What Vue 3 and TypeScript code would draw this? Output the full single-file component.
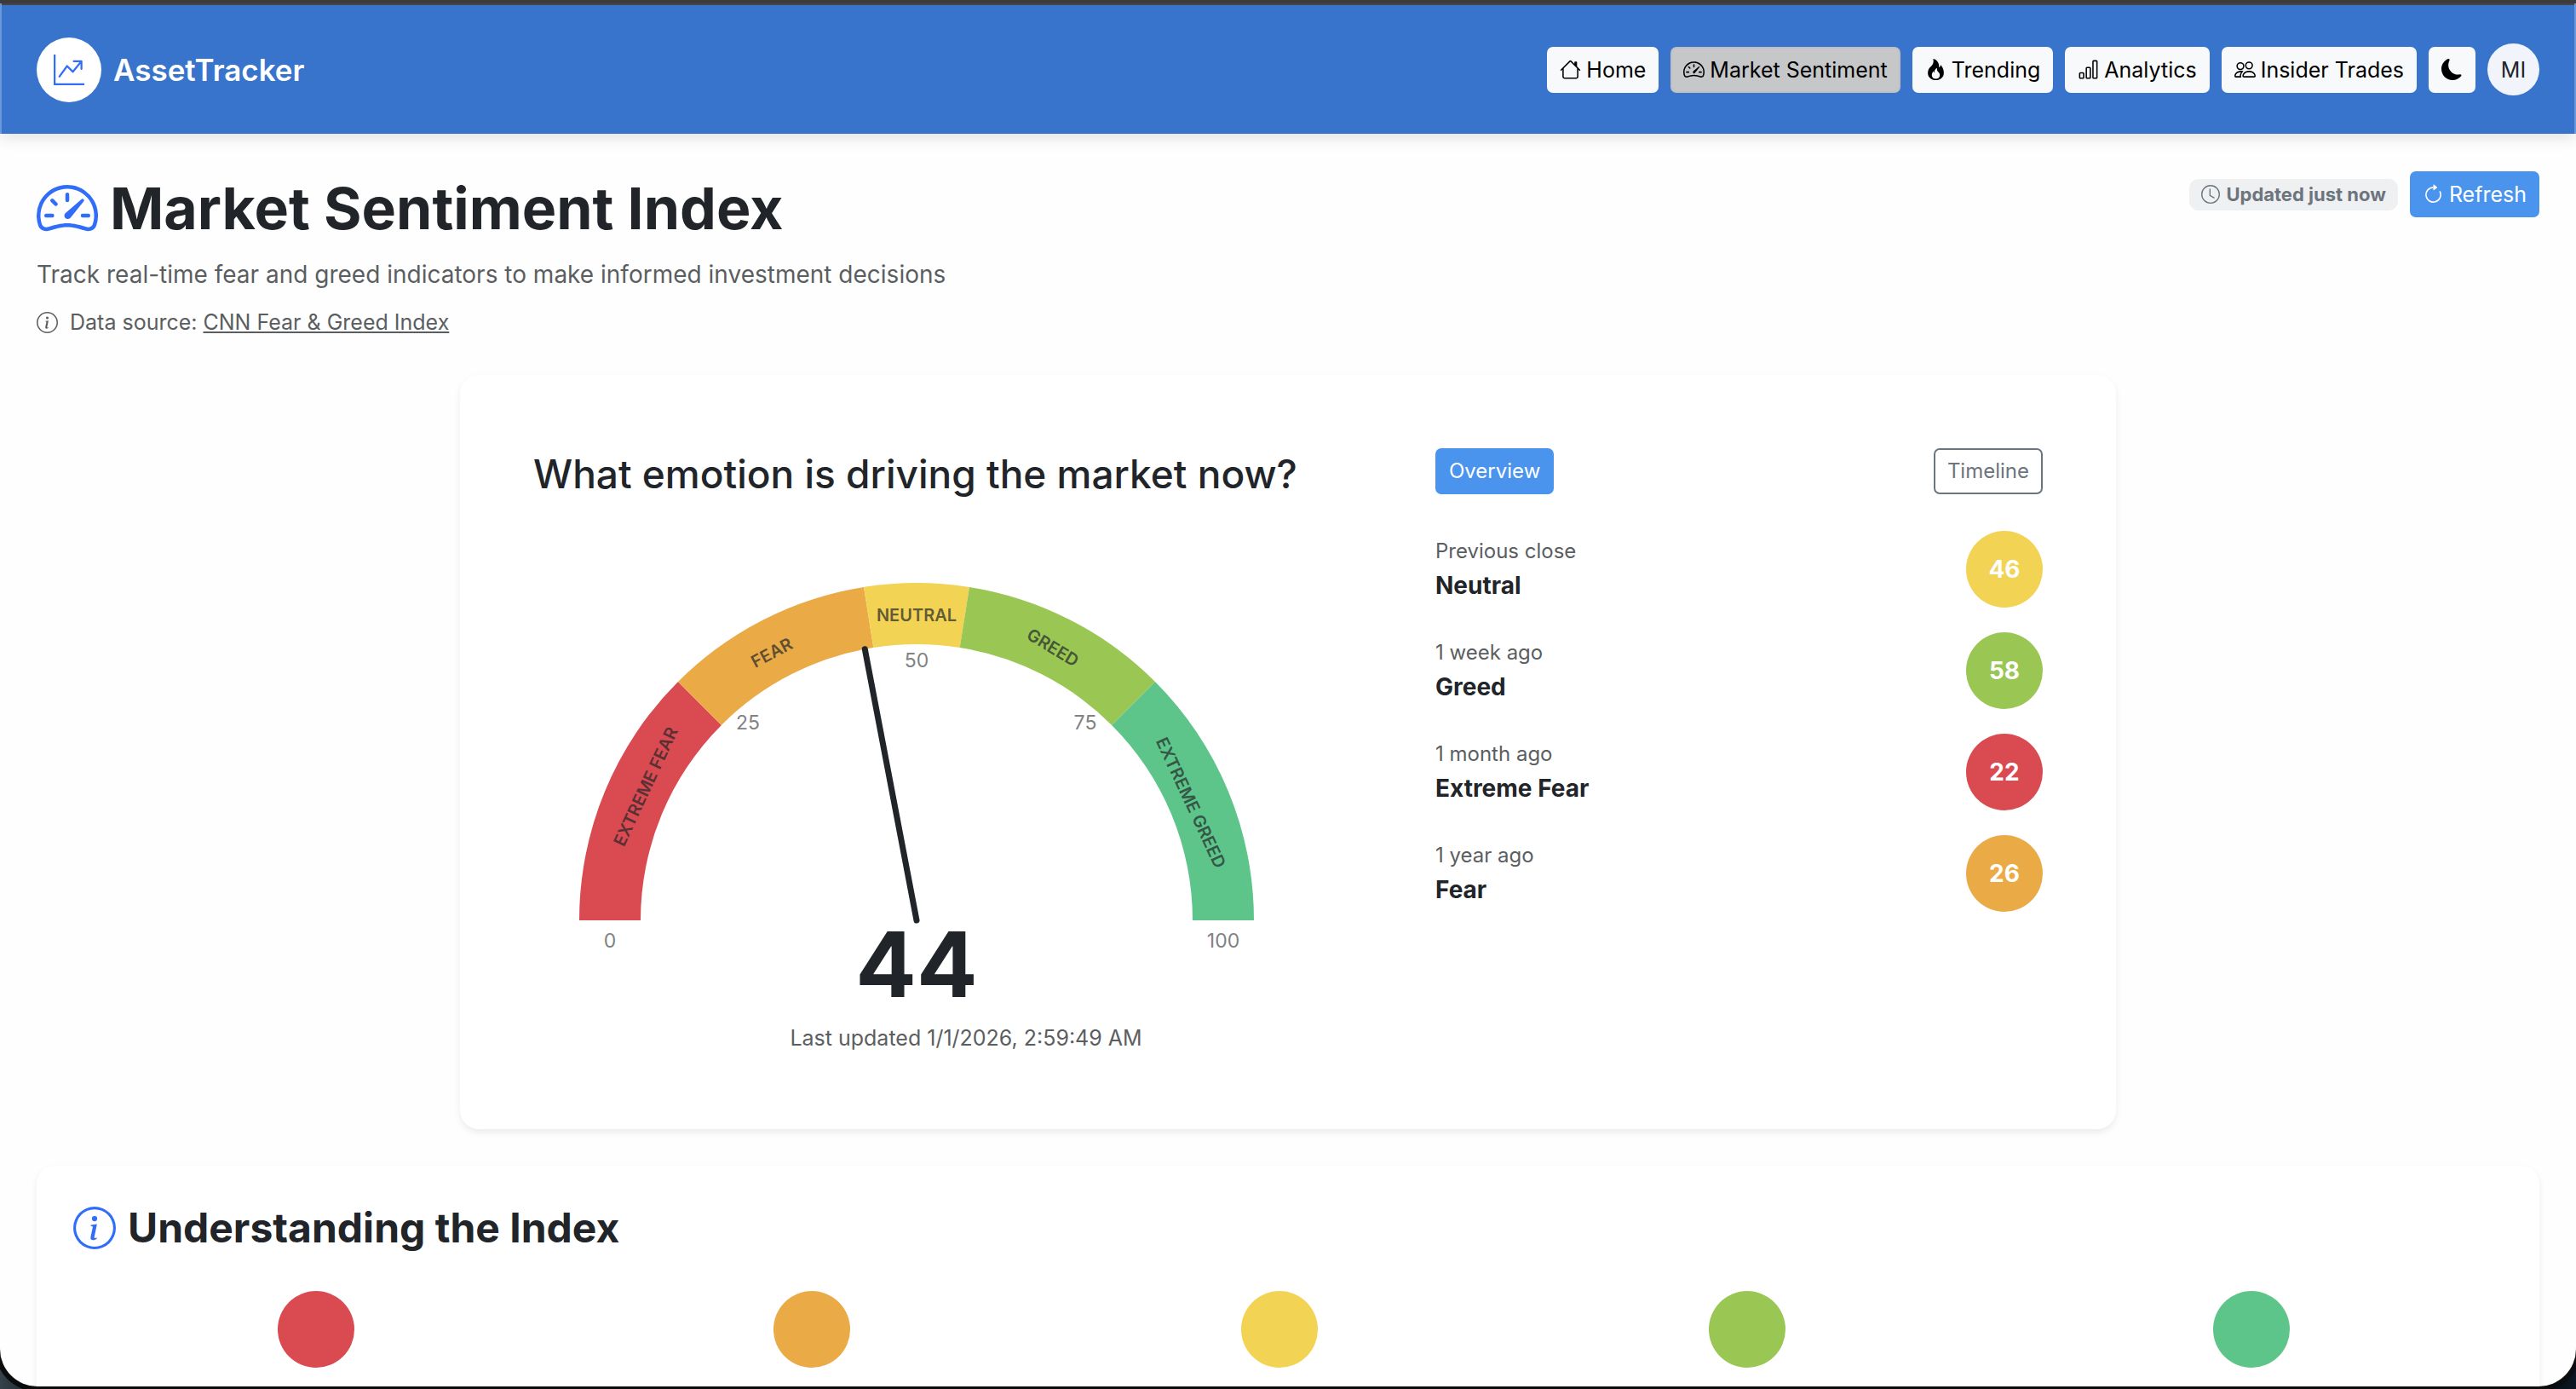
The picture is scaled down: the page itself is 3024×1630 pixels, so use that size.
<script setup lang="ts">
import { computed, h, ref, type FunctionalComponent } from 'vue'

const icons: Record<string, string[]> = {
  graph: [
    'M0 0h1v15h15v1H0zm10 3.5a.5.5 0 0 1 .5-.5h4a.5.5 0 0 1 .5.5v4a.5.5 0 0 1-1 0V4.9l-3.613 4.417a.5.5 0 0 1-.74.037L7.06 6.767l-3.656 5.027a.5.5 0 0 1-.808-.588l4-5.5a.5.5 0 0 1 .758-.06l2.609 2.61L13.445 4H10.5a.5.5 0 0 1-.5-.5',
  ],
  house: [
    'M8.707 1.5a1 1 0 0 0-1.414 0L.646 8.146a.5.5 0 0 0 .708.708L2 8.207V13.5A1.5 1.5 0 0 0 3.5 15h9a1.5 1.5 0 0 0 1.5-1.5V8.207l.646.647a.5.5 0 0 0 .708-.708L13 5.793V2.5a.5.5 0 0 0-.5-.5h-1a.5.5 0 0 0-.5.5v1.293zM13 7.207V13.5a.5.5 0 0 1-.5.5h-9a.5.5 0 0 1-.5-.5V7.207l5-5z',
  ],
  speedometer: [
    'M8 4a.5.5 0 0 1 .5.5V6a.5.5 0 0 1-1 0V4.5A.5.5 0 0 1 8 4M3.732 5.732a.5.5 0 0 1 .707 0l.915.914a.5.5 0 1 1-.708.708l-.914-.915a.5.5 0 0 1 0-.707M2 10a.5.5 0 0 1 .5-.5h1.586a.5.5 0 0 1 0 1H2.5A.5.5 0 0 1 2 10m9.5 0a.5.5 0 0 1 .5-.5h1.5a.5.5 0 0 1 0 1H12a.5.5 0 0 1-.5-.5m.754-4.246a.39.39 0 0 0-.527-.02L7.547 9.31a.91.91 0 1 0 1.302 1.258l3.434-4.297a.39.39 0 0 0-.029-.518z',
    'M0 10a8 8 0 1 1 15.547 2.661c-.442 1.253-1.845 1.602-2.932 1.25C11.309 13.488 9.475 13 8 13c-1.474 0-3.31.488-4.615.911-1.087.352-2.49.003-2.932-1.25A8 8 0 0 1 0 10m8-7a7 7 0 0 0-6.603 9.329c.203.575.923.876 1.68.63C4.397 12.533 6.358 12 8 12s3.604.532 4.923.96c.757.245 1.477-.056 1.68-.631A7 7 0 0 0 8 3',
  ],
  fire: [
    'M8 16c3.314 0 6-2 6-5.5 0-1.5-.5-4-2.5-6 .25 1.5-1.25 2-1.25 2C11 4 9 .5 6 0c.357 2 .5 4-2 6-1.25 1-2 2.729-2 4.5C2 14 4.686 16 8 16m0-1c-1.657 0-3-1-3-2.75 0-.75.25-2 1.25-3C6.125 10 7 10.5 7 10.5c-.375-1.25.5-3.25 2-3.5-.179 1-.25 2 1 3 .625.5 1 1.364 1 2.25C11 14 9.657 15 8 15',
  ],
  bars: [
    'M4 11H2v3h2zm5-4H7v7h2zm5-5v12h-2V2zm-2-1a1 1 0 0 0-1 1v12a1 1 0 0 0 1 1h2a1 1 0 0 0 1-1V2a1 1 0 0 0-1-1zM6 7a1 1 0 0 1 1-1h2a1 1 0 0 1 1 1v7a1 1 0 0 1-1 1H7a1 1 0 0 1-1-1zm-5 4a1 1 0 0 1 1-1h2a1 1 0 0 1 1 1v3a1 1 0 0 1-1 1H2a1 1 0 0 1-1-1z',
  ],
  people: [
    'M15 14s1 0 1-1-1-4-5-4-5 3-5 4 1 1 1 1zm-7.978-1L7 12.996c.001-.264.167-1.03.76-1.72C8.312 10.629 9.282 10 11 10c1.717 0 2.687.63 3.24 1.276.593.69.758 1.457.76 1.72l-.008.002-.014.002zM11 7a2 2 0 1 0 0-4 2 2 0 0 0 0 4m3-2a3 3 0 1 1-6 0 3 3 0 0 1 6 0M6.936 9.28a6 6 0 0 0-1.23-.247A7 7 0 0 0 5 9c-4 0-5 3-5 4q0 1 1 1h4.216A2.24 2.24 0 0 1 5 13c0-1.01.377-2.042 1.09-2.904.243-.294.526-.569.846-.816M4.92 10A5.5 5.5 0 0 0 4 13H1c0-.26.164-1.03.76-1.724.545-.636 1.492-1.256 3.16-1.275ZM1.5 5.5a3 3 0 1 1 6 0 3 3 0 0 1-6 0m3-2a2 2 0 1 0 0 4 2 2 0 0 0 0-4',
  ],
  moon: [
    'M6 .278a.77.77 0 0 1 .08.858 7.2 7.2 0 0 0-.878 3.46c0 4.021 3.278 7.277 7.318 7.277q.792-.001 1.533-.16a.79.79 0 0 1 .81.316.73.73 0 0 1-.031.893A8.35 8.35 0 0 1 8.344 16C3.734 16 0 12.286 0 7.71 0 4.266 2.114 1.312 5.124.06A.75.75 0 0 1 6 .278',
  ],
  clock: [
    'M8 3.5a.5.5 0 0 0-1 0V9a.5.5 0 0 0 .252.434l3.5 2a.5.5 0 0 0 .496-.868L8 8.71z',
    'M8 16A8 8 0 1 0 8 0a8 8 0 0 0 0 16m7-8A7 7 0 1 1 1 8a7 7 0 0 1 14 0',
  ],
  refresh: [
    'M8 3a5 5 0 1 0 4.546 2.914.5.5 0 0 1 .908-.417A6 6 0 1 1 8 2z',
    'M8 4.466V.534a.25.25 0 0 1 .41-.192l2.36 1.966c.12.1.12.284 0 .384L8.41 4.658A.25.25 0 0 1 8 4.466',
  ],
  info: [
    'M8 15A7 7 0 1 1 8 1a7 7 0 0 1 0 14m0 1A8 8 0 1 0 8 0a8 8 0 0 0 0 16',
    'm8.93 6.588-2.29.287-.082.38.45.083c.294.07.352.176.288.469l-.738 3.468c-.194.897.105 1.319.808 1.319.545 0 1.178-.252 1.465-.598l.088-.416c-.2.176-.492.246-.686.246-.275 0-.375-.193-.304-.533zM9 4.5a1 1 0 1 1-2 0 1 1 0 0 1 2 0',
  ],
}

const Icon: FunctionalComponent<{ name: string }> = (props) =>
  h(
    'svg',
    { viewBox: '0 0 16 16', fill: 'currentColor', 'aria-hidden': 'true' },
    icons[props.name].map((d) => h('path', { d, 'fill-rule': 'evenodd' })),
  )
Icon.props = ['name']

const nav = [
  { label: 'Home', icon: 'house' },
  { label: 'Market Sentiment', icon: 'speedometer', active: true },
  { label: 'Trending', icon: 'fire' },
  { label: 'Analytics', icon: 'bars' },
  { label: 'Insider Trades', icon: 'people' },
]

const colors = {
  extremeFear: '#d94a51',
  fear: '#eaaa45',
  neutral: '#f2d354',
  greed: '#9ac654',
  extremeGreed: '#5ec58a',
}

const score = ref(44)
const center = { x: 450, y: 450 }
const outer = 396
const inner = 324

function polar(value: number, radius: number) {
  const angle = Math.PI * (1 - value / 100)
  return {
    x: center.x + radius * Math.cos(angle),
    y: center.y - radius * Math.sin(angle),
  }
}

function arc(from: number, to: number) {
  const a = polar(from, outer)
  const b = polar(to, outer)
  const c = polar(to, inner)
  const d = polar(from, inner)
  return `M${a.x} ${a.y}A${outer} ${outer} 0 0 1 ${b.x} ${b.y}L${c.x} ${c.y}A${inner} ${inner} 0 0 0 ${d.x} ${d.y}Z`
}

const segments = [
  { label: 'EXTREME FEAR', from: 0, to: 25, color: colors.extremeFear, x: 132, y: 293, turn: -65 },
  { label: 'FEAR', from: 25, to: 45, color: colors.fear, x: 280, y: 136, turn: -28 },
  { label: 'NEUTRAL', from: 45, to: 55, color: colors.neutral, x: 450, y: 92, turn: 0 },
  { label: 'GREED', from: 55, to: 75, color: colors.greed, x: 610, y: 130, turn: 31 },
  { label: 'EXTREME GREED', from: 75, to: 100, color: colors.extremeGreed, x: 772, y: 312, turn: 65 },
]

const ticks = [
  { value: 0, x: 90, y: 482 },
  { value: 25, x: 252, y: 226 },
  { value: 50, x: 450, y: 153 },
  { value: 75, x: 648, y: 226 },
  { value: 100, x: 810, y: 482 },
]

const needle = computed(() => polar(score.value, inner))

const history = [
  { when: 'Previous close', mood: 'Neutral', value: 46, color: colors.neutral },
  { when: '1 week ago', mood: 'Greed', value: 58, color: colors.greed },
  { when: '1 month ago', mood: 'Extreme Fear', value: 22, color: colors.extremeFear },
  { when: '1 year ago', mood: 'Fear', value: 26, color: colors.fear },
]

const legend = Object.values(colors)
</script>

<template>
  <div class="desktop">
    <div class="window">
      <header class="topbar">
        <a class="brand" href="#">
          <span class="logo"><Icon name="graph" /></span>
          <span>AssetTracker</span>
        </a>
        <nav class="nav">
          <a v-for="item in nav" :key="item.label" href="#" class="btn light" :class="{ active: item.active }">
            <Icon class="ico" :name="item.icon" />{{ item.label }}
          </a>
          <button type="button" class="btn light" aria-label="Toggle dark mode"><Icon class="ico" name="moon" /></button>
          <button type="button" class="avatar">MI</button>
        </nav>
      </header>

      <main class="page">
        <div class="intro">
          <div>
            <h1 class="title"><Icon class="title-icon" name="speedometer" />Market Sentiment Index</h1>
            <p class="lead">Track real-time fear and greed indicators to make informed investment decisions</p>
            <p class="source"><Icon class="ico" name="info" /><span>Data source: <a href="#">CNN Fear &amp; Greed Index</a></span></p>
          </div>
          <div class="status">
            <span class="badge"><Icon class="badge-icon" name="clock" />Updated just now</span>
            <button type="button" class="btn primary"><Icon class="ico" name="refresh" />Refresh</button>
          </div>
        </div>

        <section class="card gauge-card">
          <div class="gauge-col">
            <h2 class="question">What emotion is driving the market now?</h2>
            <svg class="gauge" viewBox="0 0 900 569" role="img" aria-label="Fear and greed gauge">
              <path v-for="s in segments" :key="s.label" :d="arc(s.from, s.to)" :fill="s.color" />
              <text
                v-for="s in segments"
                :key="s.label"
                class="seg-label"
                :transform="`translate(${s.x} ${s.y}) rotate(${s.turn})`"
                y="7"
              >{{ s.label }}</text>
              <text v-for="t in ticks" :key="t.value" class="tick" :x="t.x" :y="t.y">{{ t.value }}</text>
              <line class="needle" :x1="center.x" :y1="center.y" :x2="needle.x" :y2="needle.y" />
              <text class="score" :x="center.x" y="540">{{ score }}</text>
            </svg>
            <p class="updated">Last updated 1/1/2026, 2:59:49 AM</p>
          </div>

          <div class="history-col">
            <div class="tabs">
              <button type="button" class="btn tab primary">Overview</button>
              <button type="button" class="btn tab outline">Timeline</button>
            </div>
            <ul class="history">
              <li v-for="row in history" :key="row.when">
                <div>
                  <div class="when">{{ row.when }}</div>
                  <div class="mood">{{ row.mood }}</div>
                </div>
                <span class="dot" :style="{ backgroundColor: row.color }">{{ row.value }}</span>
              </li>
            </ul>
          </div>
        </section>

        <section class="card guide">
          <h2 class="guide-title"><Icon class="guide-icon" name="info" />Understanding the Index</h2>
          <div class="legend">
            <span v-for="c in legend" :key="c" class="dot" :style="{ backgroundColor: c }"></span>
          </div>
        </section>
      </main>
    </div>
  </div>
</template>

<style>
body {
  margin: 0;
  background: #000;
}
</style>

<style scoped>
* {
  box-sizing: border-box;
}
h1,
h2,
p,
ul {
  margin: 0;
  padding: 0;
}
svg {
  display: block;
  flex: none;
}
.desktop {
  height: 100vh;
  padding-bottom: 3px;
  background: linear-gradient(90deg, #34424a, #000 3%, #000 97%, #0a1622);
  font-family: Inter, "Noto Sans", sans-serif;
  color: #212529;
}
.window {
  height: 100%;
  overflow: hidden;
  background: #fefefe;
  border-top: 4px solid #3b3b3b;
  border-radius: 0 0 44px 44px;
  box-shadow: 0 0 0 6px #0a0c0d;
}
.topbar {
  display: flex;
  align-items: center;
  justify-content: space-between;
  height: 153px;
  padding: 2px 41px 0;
  background: #3873cc;
  border: solid #6a96da;
  border-width: 0 2px;
  box-shadow: inset 0 2px #454545, 0 4px 18px rgba(0, 0, 0, 0.12);
}
.brand {
  display: flex;
  align-items: center;
  gap: 14px;
  color: #fff;
  font-size: 35px;
  font-weight: 600;
  text-decoration: none;
}
.logo {
  display: grid;
  place-items: center;
  width: 76px;
  height: 76px;
  border-radius: 50%;
  background: #fff;
  color: #306df8;
}
.logo svg {
  width: 36px;
}
.nav {
  display: flex;
  align-items: center;
  gap: 14px;
}
.btn {
  display: inline-flex;
  align-items: center;
  gap: 6px;
  height: 54px;
  padding: 0 13px;
  border: 2px solid transparent;
  border-radius: 7px;
  font: 400 25px/38px Inter, "Noto Sans", sans-serif;
  text-decoration: none;
  white-space: nowrap;
}
.tab {
  padding: 0 14px;
  font-size: 24px;
}
.ico {
  width: 25px;
}
.light {
  background: #f8f9fb;
  border-color: #f8f9fb;
  color: #000;
}
.active {
  background: #c6c7c9;
  border-color: #bfc0c3;
}
.primary {
  background: #4a94ee;
  border-color: #4a94ee;
  color: #fff;
}
.outline {
  background: none;
  border-color: #6c757d;
  color: #6c757d;
}
.avatar {
  width: 61px;
  height: 61px;
  padding: 0;
  border: 0;
  border-radius: 50%;
  background: #f1f5fb;
  color: #212529;
  font: 400 25px/38px Inter, "Noto Sans", sans-serif;
}
.page {
  padding: 44px 43px;
}
.intro {
  display: flex;
  justify-content: space-between;
  align-items: flex-start;
}
.title {
  display: flex;
  align-items: center;
  gap: 14px;
  margin-bottom: 14px;
  font-size: 68px;
  line-height: 86px;
  font-weight: 700;
}
.title-icon {
  width: 72px;
  color: #306df8;
}
.lead {
  margin-bottom: 15px;
  font-size: 28px;
  line-height: 43px;
  color: #5b5e61;
}
.source {
  display: flex;
  align-items: center;
  gap: 14px;
  font-size: 25px;
  line-height: 38px;
  color: #5b5e61;
}
.source a {
  color: inherit;
}
.status {
  display: flex;
  align-items: center;
  gap: 14px;
}
.badge {
  display: flex;
  align-items: center;
  gap: 7px;
  height: 37px;
  padding: 0 14px;
  border-radius: 11px;
  background: #eff0f2;
  color: #6c757d;
  font-size: 22px;
  font-weight: 700;
}
.badge-icon {
  width: 22px;
}
.card {
  background: #fff;
  border-radius: 22px;
  box-shadow: 0 4px 8px rgba(0, 0, 0, 0.075);
}
.gauge-card {
  display: grid;
  grid-template-columns: 1016fr 713fr;
  gap: 43px;
  max-width: 1944px;
  margin: 43px auto;
  padding: 86px 86px 88px;
}
.question {
  margin-bottom: 44px;
  font-size: 46px;
  line-height: 60px;
  font-weight: 500;
}
.gauge {
  width: 900px;
  max-width: 100%;
}
.seg-label {
  font-size: 20px;
  font-weight: 600;
  text-anchor: middle;
  fill: rgba(33, 37, 41, 0.7);
}
.tick {
  font-size: 23px;
  text-anchor: middle;
  fill: #808284;
}
.needle {
  stroke: #212529;
  stroke-width: 7;
  stroke-linecap: round;
}
.score {
  font-size: 106px;
  font-weight: 700;
  text-anchor: middle;
  fill: #212529;
}
.updated {
  font-size: 25px;
  line-height: 38px;
  text-align: center;
  color: #5b5e61;
}
.tabs {
  display: flex;
  justify-content: space-between;
  margin-bottom: 43px;
}
.history {
  display: grid;
  gap: 29px;
  list-style: none;
}
.history li {
  display: flex;
  align-items: center;
  justify-content: space-between;
}
.when {
  font-size: 24px;
  line-height: 38px;
  color: #5b5e61;
}
.mood {
  font-size: 28px;
  line-height: 43px;
  font-weight: 700;
}
.dot {
  display: grid;
  place-items: center;
  width: 90px;
  height: 90px;
  border-radius: 50%;
  color: #fff;
  font-size: 28px;
  font-weight: 700;
}
.guide {
  padding: 43px;
}
.guide-title {
  display: flex;
  align-items: center;
  gap: 14px;
  margin-bottom: 44px;
  font-size: 48px;
  line-height: 60px;
  font-weight: 700;
}
.guide-icon {
  width: 50px;
  color: #306df8;
}
.legend {
  display: grid;
  grid-template-columns: 570fr 594fr 504fr 594fr 590fr;
  justify-items: center;
  padding-bottom: 140px;
}
</style>
